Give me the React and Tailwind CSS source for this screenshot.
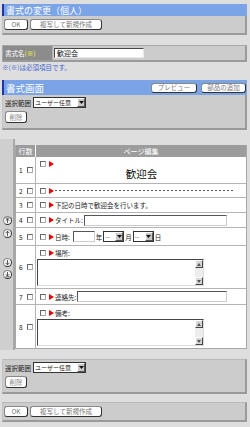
import React from "react";

const Btn = ({ w, children }) => (
  <div
    className={`h-[11px] ${w} bg-white rounded-[3px] border border-[#888] border-r-[#333] border-b-[#333] flex items-center justify-center text-[6.5px] text-[#777] leading-none shrink-0`}
  >
    {children}
  </div>
);

const SmallBtn = ({ w, children }) => (
  <div
    className={`h-[10px] ${w} bg-white rounded-[3px] border border-[#888] border-r-[#333] border-b-[#333] flex items-center justify-center text-[6.5px] text-[#777] leading-none shrink-0`}
  >
    {children}
  </div>
);

const DownTri = () => (
  <svg width="5" height="3" viewBox="0 0 5 3">
    <polygon points="0,0 5,0 2.5,3" fill="#111" />
  </svg>
);

const Select = ({ w, text }) => (
  <div className={`h-[11px] ${w} bg-white border border-[#333] flex items-center shrink-0`}>
    <span className="flex-1 min-w-0 text-[6px] leading-[9px] pl-[1px] text-[#222] whitespace-nowrap">
      {text}
    </span>
    <span className="w-[8px] h-[9px] shrink-0 bg-[#c8c8c8] border border-[#fff] border-r-[#555] border-b-[#555] flex items-center justify-center">
      <DownTri />
    </span>
  </div>
);

const Panel = ({ h, children, top = true }) => (
  <div
    className={`${h} bg-[#cccccc] ${top ? "border-t border-t-[#b8b8b8]" : ""} border-l border-l-[#c4c4c4] border-r-2 border-b-2 border-r-[#9a9a9a] border-b-[#9a9a9a]`}
  >
    {children}
  </div>
);

const Cb = () => (
  <span className="inline-block w-[6px] h-[6px] bg-white border border-[#666] border-r-[#aaa] border-b-[#aaa] shrink-0" />
);

const Tri = () => (
  <span className="inline-block w-0 h-0 border-y-[3px] border-y-transparent border-l-[5px] border-l-[#ee0000] shrink-0" />
);

const Line = ({ children }) => (
  <div className="flex items-center h-[8px] pl-[3px]">
    <Cb />
    <span className="ml-[3px] flex">
      <Tri />
    </span>
    {children}
  </div>
);

const Txt = ({ children, cls = "" }) => (
  <span className={`text-[6.5px] leading-[8px] text-[#222] whitespace-nowrap ${cls}`}>{children}</span>
);

const Input = ({ w }) => (
  <div className={`h-[11px] ${w} bg-white border border-[#555] border-r-[#ccc] border-b-[#ccc]`} />
);

const Up = () => (
  <svg width="4" height="3" viewBox="0 0 4 3">
    <polygon points="0,3 4,3 2,0" fill="#555" />
  </svg>
);
const Dn = () => (
  <svg width="4" height="3" viewBox="0 0 4 3">
    <polygon points="0,0 4,0 2,3" fill="#555" />
  </svg>
);

const TextArea = () => (
  <div className="w-[167px] h-[27px] bg-white border border-[#444] border-r-[#ddd] border-b-[#ddd] flex justify-end">
    <div className="w-[8px] h-full flex flex-col">
      <div className="h-[8px] bg-[#d6d6d6] border border-[#fff] border-r-[#444] border-b-[#444] flex items-center justify-center">
        <Up />
      </div>
      <div className="flex-1 bg-[#ededed]" />
      <div className="h-[8px] bg-[#d6d6d6] border border-[#fff] border-r-[#444] border-b-[#444] flex items-center justify-center">
        <Dn />
      </div>
    </div>
  </div>
);

const Num = ({ n }) => (
  <div className="w-[20px] shrink-0 border-r border-[#b4b4b4] flex items-center pl-[3px] gap-[4px]">
    <span className="text-[6.5px] leading-[8px] text-[#222]">{n}</span>
    <Cb />
  </div>
);

const Circle = ({ kind }) => (
  <div className="w-[9px] h-[9px] rounded-full bg-[#f6f6f6] border border-[#888] border-r-[#333] border-b-[#333] flex items-center justify-center">
    <svg width="7" height="7" viewBox="0 0 7 7" fill="none" stroke="#333" strokeWidth="0.8">
      {kind === "top" && (
        <>
          <path d="M1.5 1.2 H5.5" />
          <path d="M3.5 2 V6 M1.8 3.7 L3.5 2 L5.2 3.7" />
        </>
      )}
      {kind === "up" && <path d="M3.5 1.2 V6 M1.6 3.2 L3.5 1.2 L5.4 3.2" />}
      {kind === "down" && <path d="M3.5 1 V5.8 M1.6 3.8 L3.5 5.8 L5.4 3.8" />}
      {kind === "bottom" && (
        <>
          <path d="M1.5 5.8 H5.5" />
          <path d="M3.5 1 V5 M1.8 3.3 L3.5 5 L5.2 3.3" />
        </>
      )}
    </svg>
  </div>
);

export default function App() {
  return (
    <div className="w-[250px] h-[427px] overflow-hidden bg-[#dedede] pt-[4px] pl-[2px] pr-[3px] font-['Noto_Sans_CJK_JP','Liberation_Sans',sans-serif]">
      {/* Title bar 1 */}
      <div className="h-[12px] bg-[#7ba4e6] border-l-2 border-[#2233aa] flex items-center pl-[2px]">
        <span className="text-[9px] leading-[11px] text-white whitespace-nowrap">書式の変更（個人）</span>
      </div>
      <Panel h="h-[19px]" top={false}>
        <div className="h-full flex items-center gap-[2px] pl-[1px]">
          <Btn w="w-[24px]">OK</Btn>
          <Btn w="w-[72px]">複写して新規作成</Btn>
        </div>
      </Panel>

      {/* Name row */}
      <div className="mt-[10px] h-[17px] bg-[#cccccc] border border-[#a8a8a8] border-r-2 border-b-2 border-r-[#9a9a9a] border-b-[#9a9a9a] flex">
        <div className="w-[50px] h-full bg-[#8c8c8c] border-r border-[#b0b0b0] flex items-center pl-[2px]">
          <span className="text-[6.5px] leading-[8px] text-white whitespace-nowrap">
            書式名<span className="text-[#ffff33]">(※)</span>
          </span>
        </div>
        <div className="flex items-center pl-[1px]">
          <div className="w-[90px] h-[10px] bg-white border border-[#444] border-r-[#e8e8e8] border-b-[#e8e8e8] flex items-center pl-[2px]">
            <span className="text-[7px] leading-[8px] text-[#111]">歓迎会</span>
          </div>
        </div>
      </div>
      <div className="h-[10px] flex items-center">
        <span className="text-[6.5px] leading-[8px] text-[#3f63d0] whitespace-nowrap">※(※)は必須項目です。</span>
      </div>

      {/* Title bar 2 */}
      <div className="mt-[8px] h-[15px] bg-[#7ba4e6] border-l-2 border-[#2233aa] flex items-center justify-between pl-[2px] pr-[1px]">
        <span className="text-[9.5px] leading-[12px] text-white whitespace-nowrap">書式画面</span>
        <div className="flex gap-[4px]">
          <SmallBtn w="w-[46px]">プレビュー</SmallBtn>
          <SmallBtn w="w-[45px]">部品の追加</SmallBtn>
        </div>
      </div>
      <Panel h="h-[35px]" top={false}>
        <div className="flex flex-col pl-[2px] pt-[2px] gap-[3px]">
          <div className="flex items-center gap-[2px]">
            <Txt>選択範囲</Txt>
            <Select w="w-[53px]" text="ユーザー任意" />
          </div>
          <div className="flex">
            <div className="h-[12px] w-[22px] bg-white rounded-[3px] border border-[#888] border-r-[#333] border-b-[#333] flex items-center justify-center text-[6.5px] text-[#888] leading-none">
              削除
            </div>
          </div>
        </div>
      </Panel>

      {/* Table section */}
      <div className="mt-[9px] -ml-[2px] h-[211px] flex">
        <div className="w-[15px] shrink-0 bg-[#cfcfcf] border-r-2 border-[#a8a8a8] flex flex-col items-end justify-center pr-[1px] pt-[6px]">
          <Circle kind="top" />
          <div className="mt-[4px]">
            <Circle kind="up" />
          </div>
          <div className="mt-[20px]">
            <Circle kind="down" />
          </div>
          <div className="mt-[3px]">
            <Circle kind="bottom" />
          </div>
        </div>
        <div className="flex-1 pt-[6px]">
          <div className="bg-white border border-[#a8a8a8] border-t-0">
            {/* header */}
            <div className="flex h-[12px] bg-[#9c9c9c]">
              <div className="w-[20px] shrink-0 border-r border-white flex items-center justify-center">
                <span className="text-[7px] leading-[9px] text-white">行数</span>
              </div>
              <div className="flex-1 flex items-center justify-center">
                <span className="text-[7px] leading-[9px] text-white">ページ編集</span>
              </div>
            </div>
            {/* row 1 */}
            <div className="flex h-[26px]">
              <Num n="1" />
              <div className="flex-1 flex flex-col pl-[1px] pt-[3px]">
                <Line />
                <div className="flex justify-center">
                  <span className="text-[10.5px] leading-[12px] text-[#111]">歓迎会</span>
                </div>
              </div>
            </div>
            {/* row 2 */}
            <div className="flex h-[14px] border-t border-[#b4b4b4]">
              <Num n="2" />
              <div className="flex-1 flex items-center pl-[1px]">
                <Line>
                  <div className="ml-[1px] w-[178px] h-[1px] bg-[repeating-linear-gradient(90deg,#555_0_2px,transparent_2px_4px)]" />
                </Line>
              </div>
            </div>
            {/* row 3 */}
            <div className="flex h-[15px] border-t border-[#b4b4b4]">
              <Num n="3" />
              <div className="flex-1 flex items-center pl-[1px]">
                <Line>
                  <Txt cls="ml-[1px]">下記の日時で歓迎会を行います。</Txt>
                </Line>
              </div>
            </div>
            {/* row 4 */}
            <div className="flex h-[15px] border-t border-[#b4b4b4]">
              <Num n="4" />
              <div className="flex-1 flex items-center pl-[1px] pr-[19px]">
                <div className="flex-1">
                  <Line>
                    <Txt cls="ml-[1px]">タイトル:</Txt>
                    <div className="ml-[1px] flex-1 h-[11px] bg-white border border-[#555] border-r-[#ccc] border-b-[#ccc]" />
                  </Line>
                </div>
              </div>
            </div>
            {/* row 5 */}
            <div className="flex h-[18px] border-t border-[#b4b4b4]">
              <Num n="5" />
              <div className="flex-1 flex items-center pl-[1px]">
                <Line>
                  <Txt cls="ml-[1px]">日時:</Txt>
                  <div className="ml-[3px]">
                    <Input w="w-[22px]" />
                  </div>
                  <Txt cls="ml-[1px]">年</Txt>
                  <div className="ml-[1px]">
                    <Select w="w-[21px]" text="--" />
                  </div>
                  <Txt cls="ml-[1px]">月</Txt>
                  <div className="ml-[1px]">
                    <Select w="w-[21px]" text="--" />
                  </div>
                  <Txt cls="ml-[1px]">日</Txt>
                </Line>
              </div>
            </div>
            {/* row 6 */}
            <div className="flex h-[43px] border-t border-[#b4b4b4]">
              <Num n="6" />
              <div className="flex-1 flex flex-col pl-[1px] pt-[3px]">
                <Line>
                  <Txt cls="ml-[1px]">場所:</Txt>
                </Line>
                <div className="mt-[2px]">
                  <TextArea />
                </div>
              </div>
            </div>
            {/* row 7 */}
            <div className="flex h-[16px] border-t border-[#b4b4b4]">
              <Num n="7" />
              <div className="flex-1 flex items-center pl-[1px] pr-[19px]">
                <div className="flex-1">
                  <Line>
                    <Txt cls="ml-[1px]">連絡先:</Txt>
                    <div className="ml-[1px] flex-1 h-[11px] bg-white border border-[#555] border-r-[#ccc] border-b-[#ccc]" />
                  </Line>
                </div>
              </div>
            </div>
            {/* row 8 */}
            <div className="flex h-[44px] border-t border-[#b4b4b4]">
              <Num n="8" />
              <div className="flex-1 flex flex-col pl-[1px] pt-[4px]">
                <Line>
                  <Txt cls="ml-[1px]">備考:</Txt>
                </Line>
                <div className="mt-[2px]">
                  <TextArea />
                </div>
              </div>
            </div>
          </div>
        </div>
      </div>

      {/* bottom panels */}
      <div className="mt-[9px]">
        <Panel h="h-[35px]">
          <div className="flex flex-col pl-[2px] pt-[2px] gap-[3px]">
            <div className="flex items-center gap-[2px]">
              <Txt>選択範囲</Txt>
              <Select w="w-[53px]" text="ユーザー任意" />
            </div>
            <div className="flex">
              <div className="h-[12px] w-[22px] bg-white rounded-[3px] border border-[#888] border-r-[#333] border-b-[#333] flex items-center justify-center text-[6.5px] text-[#888] leading-none">
                削除
              </div>
            </div>
          </div>
        </Panel>
      </div>
      <div className="mt-[8px]">
        <Panel h="h-[20px]">
          <div className="h-full flex items-center gap-[2px] pl-[1px]">
            <Btn w="w-[24px]">OK</Btn>
            <Btn w="w-[72px]">複写して新規作成</Btn>
          </div>
        </Panel>
      </div>
    </div>
  );
}
